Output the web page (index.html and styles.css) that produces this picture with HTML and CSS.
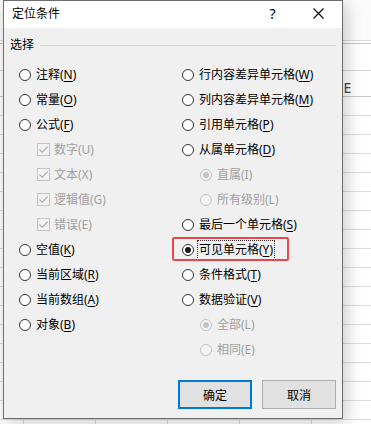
FILE: index.html
```html
<!DOCTYPE html>
<html lang="zh-CN">
<head>
  <meta charset="UTF-8">
  <title>定位条件</title>
  <link rel="stylesheet" href="styles.css">
</head>
<body>
<div class="sheet">
  <div class="sheet-bar"></div>
  <div class="sheet-gap"></div>
  <div class="sheet-formula"></div>
  <div class="sheet-row sheet-head">
    <span></span><span></span><span></span><span></span><span></span><span>E</span>
  </div>
  <div class="sheet-row"><span></span><span></span><span></span><span></span><span></span><span></span></div>
  <div class="sheet-row"><span></span><span></span><span></span><span></span><span></span><span></span></div>
  <div class="sheet-row"><span></span><span></span><span></span><span></span><span></span><span></span></div>
  <div class="sheet-row"><span></span><span></span><span></span><span></span><span></span><span></span></div>
  <div class="sheet-row"><span></span><span></span><span></span><span></span><span></span><span></span></div>
  <div class="sheet-row"><span></span><span></span><span></span><span></span><span></span><span></span></div>
  <div class="sheet-row"><span></span><span></span><span></span><span></span><span></span><span></span></div>
  <div class="sheet-row"><span></span><span></span><span></span><span></span><span></span><span></span></div>
  <div class="sheet-row"><span></span><span></span><span></span><span></span><span></span><span></span></div>
  <div class="sheet-row"><span></span><span></span><span></span><span></span><span></span><span></span></div>
  <div class="sheet-row"><span></span><span></span><span></span><span></span><span></span><span></span></div>
  <div class="sheet-row"><span></span><span></span><span></span><span></span><span></span><span></span></div>
  <div class="sheet-row"><span></span><span></span><span></span><span></span><span></span><span></span></div>
  <div class="sheet-row"><span></span><span></span><span></span><span></span><span></span><span></span></div>
  <div class="sheet-row"><span></span><span></span><span></span><span></span><span></span><span></span></div>
  <div class="sheet-row"><span></span><span></span><span></span><span></span><span></span><span></span></div>
  <div class="sheet-row"><span></span><span></span><span></span><span></span><span></span><span></span></div>
  <div class="sheet-row"><span></span><span></span><span></span><span></span><span></span><span></span></div>
</div>

<div class="dialog">
  <div class="titlebar">
    <span class="title">定位条件</span>
    <span class="caption-btn help">?</span>
    <span class="caption-btn close">
      <svg width="11" height="11" viewBox="0 0 11 11"><path d="M0.5 0.5L10.5 10.5M10.5 0.5L0.5 10.5" stroke="#000" stroke-width="1.1" fill="none"/></svg>
    </span>
  </div>

  <div class="dialog-body">
    <div class="group-head">
      <span class="group-label">选择</span>
      <span class="group-line"></span>
    </div>

    <div class="options">
      <div class="col">
        <div class="opt"><span class="radio"></span><span class="label">注释(<u>N</u>)</span></div>
        <div class="opt"><span class="radio"></span><span class="label">常量(<u>O</u>)</span></div>
        <div class="opt"><span class="radio"></span><span class="label">公式(<u>F</u>)</span></div>
        <div class="opt sub disabled"><span class="check"><svg width="11" height="11" viewBox="0 0 11 11"><path d="M1.5 5.5L4.2 8.3L9.6 2.6" stroke="#a8a8a8" stroke-width="1.1" fill="none"/></svg></span><span class="label">数字(U)</span></div>
        <div class="opt sub disabled"><span class="check"><svg width="11" height="11" viewBox="0 0 11 11"><path d="M1.5 5.5L4.2 8.3L9.6 2.6" stroke="#a8a8a8" stroke-width="1.1" fill="none"/></svg></span><span class="label">文本(X)</span></div>
        <div class="opt sub disabled"><span class="check"><svg width="11" height="11" viewBox="0 0 11 11"><path d="M1.5 5.5L4.2 8.3L9.6 2.6" stroke="#a8a8a8" stroke-width="1.1" fill="none"/></svg></span><span class="label">逻辑值(G)</span></div>
        <div class="opt sub disabled"><span class="check"><svg width="11" height="11" viewBox="0 0 11 11"><path d="M1.5 5.5L4.2 8.3L9.6 2.6" stroke="#a8a8a8" stroke-width="1.1" fill="none"/></svg></span><span class="label">错误(E)</span></div>
        <div class="opt"><span class="radio"></span><span class="label">空值(<u>K</u>)</span></div>
        <div class="opt"><span class="radio"></span><span class="label">当前区域(<u>R</u>)</span></div>
        <div class="opt"><span class="radio"></span><span class="label">当前数组(<u>A</u>)</span></div>
        <div class="opt"><span class="radio"></span><span class="label">对象(<u>B</u>)</span></div>
      </div>

      <div class="col">
        <div class="opt"><span class="radio"></span><span class="label">行内容差异单元格(<u>W</u>)</span></div>
        <div class="opt"><span class="radio"></span><span class="label">列内容差异单元格(<u>M</u>)</span></div>
        <div class="opt"><span class="radio"></span><span class="label">引用单元格(<u>P</u>)</span></div>
        <div class="opt"><span class="radio"></span><span class="label">从属单元格(<u>D</u>)</span></div>
        <div class="opt sub disabled"><span class="radio checked"></span><span class="label">直属(I)</span></div>
        <div class="opt sub disabled"><span class="radio"></span><span class="label">所有级别(L)</span></div>
        <div class="opt"><span class="radio"></span><span class="label">最后一个单元格(<u>S</u>)</span></div>
        <div class="opt marked">
          <span class="radio checked"></span><span class="label focus">可见单元格(<u>Y</u>)</span>
          <span class="mark-box"></span>
        </div>
        <div class="opt"><span class="radio"></span><span class="label">条件格式(<u>T</u>)</span></div>
        <div class="opt"><span class="radio"></span><span class="label">数据验证(<u>V</u>)</span></div>
        <div class="opt sub disabled"><span class="radio checked"></span><span class="label">全部(L)</span></div>
        <div class="opt sub disabled"><span class="radio"></span><span class="label">相同(E)</span></div>
      </div>
    </div>

    <div class="buttons">
      <button class="btn default">确定</button>
      <button class="btn">取消</button>
    </div>
  </div>
</div>
</body>
</html>
```

FILE: styles.css
```css
body {
  margin: 0;
  width: 371px;
  height: 424px;
  overflow: hidden;
  position: relative;
  background: #ffffff;
  font-family: "Noto Sans", "Noto Sans CJK SC", sans-serif;
  font-size: 12px;
  color: #000;
}

/* spreadsheet behind the dialog */
.sheet-bar {
  height: 40px;
  background: #fbfbfb;
  border-bottom: 1px solid #dadada;
}

.sheet-gap {
  height: 2px;
  border-bottom: 1px solid #c6c6c6;
}

.sheet-formula {
  height: 26px;
  border-bottom: 1px solid #d4d4d4;
}

.sheet-row {
  display: grid;
  grid-template-columns: 24px repeat(5, 72px);
  height: 18px;
  border-bottom: 1px solid #dcdcdc;
}

.sheet-row span {
  border-right: 1px solid #dcdcdc;
}

.sheet-head {
  height: 25px;
  border-bottom-color: #c8c8c8;
}

.sheet-head span {
  font-family: "Noto Sans", sans-serif;
  font-size: 14px;
  color: #444;
  line-height: 25px;
  padding-top: 4px;
  box-sizing: border-box;
  text-align: center;
  border-right-color: #e2e2e2;
}

/* dialog */
.dialog {
  position: absolute;
  left: 3px;
  top: 0;
  width: 338px;
  height: 417px;
  border: 1px solid #6f6f6f;
  background: #f0f0f0;
  box-shadow: 3px 3px 16px rgba(0, 0, 0, 0.22);
  display: flex;
  flex-direction: column;
}

.titlebar {
  height: 27px;
  background: #ffffff;
  display: flex;
  align-items: center;
}

.title {
  flex: 1;
  padding-left: 8px;
  line-height: 16px;
  margin-top: -1px;
}

.caption-btn {
  width: 45px;
  height: 27px;
  display: flex;
  align-items: center;
  justify-content: center;
}

.help {
  font-family: "Noto Sans", sans-serif;
  font-size: 14px;
  margin-top: -2px;
}

.close {
  width: 46px;
  margin-right: 1px;
  margin-top: -2px;
}

.dialog-body {
  flex: 1;
  display: flex;
  flex-direction: column;
}

.group-head {
  display: flex;
  align-items: center;
  height: 34px;
  padding: 0 6px;
  gap: 6px;
}

.group-label {
  line-height: 16px;
  margin-top: -1px;
}

.group-line {
  flex: 1;
  height: 1px;
  background: #d9d9d9;
}

.options {
  display: grid;
  grid-template-columns: 163px 1fr;
  padding-left: 15px;
}

.opt {
  height: 25px;
  display: flex;
  align-items: center;
  gap: 5px;
  position: relative;
  white-space: nowrap;
}

.opt.sub {
  padding-left: 18px;
}

.label {
  line-height: 16px;
}

.label u {
  text-underline-offset: 2px;
}

.disabled .label {
  color: #a0a0a0;
}

.radio {
  width: 10px;
  height: 10px;
  border: 1px solid #333;
  border-radius: 50%;
  background: #ffffff;
  display: flex;
  align-items: center;
  justify-content: center;
  flex: none;
}

.radio.checked::after {
  content: "";
  width: 6px;
  height: 6px;
  border-radius: 50%;
  background: #1a1a1a;
}

.disabled .radio {
  border-color: #c2c2c2;
  background: #f4f4f4;
}

.disabled .radio.checked::after {
  background: #c4c4c4;
}

.check {
  width: 11px;
  height: 11px;
  border: 1px solid #c4c4c4;
  background: #f2f2f2;
  flex: none;
  display: flex;
  margin-right: -1px;
}

.focus {
  outline: 1px dotted #333;
  outline-offset: 1px;
}

.mark-box {
  position: absolute;
  left: -10px;
  top: 0;
  width: 113px;
  height: 20px;
  border: 2px solid #e5484d;
  border-radius: 2px;
}

.buttons {
  display: flex;
  justify-content: flex-end;
  gap: 10px;
  padding: 18px 6px 0 0;
}

.btn {
  width: 74px;
  height: 29px;
  border: 1px solid #adadad;
  background: #e1e1e1;
  font-family: "Noto Sans", "Noto Sans CJK SC", sans-serif;
  font-size: 12px;
  color: #000;
  padding: 0;
}

.btn.default {
  border: 2px solid #0078d7;
}
```
